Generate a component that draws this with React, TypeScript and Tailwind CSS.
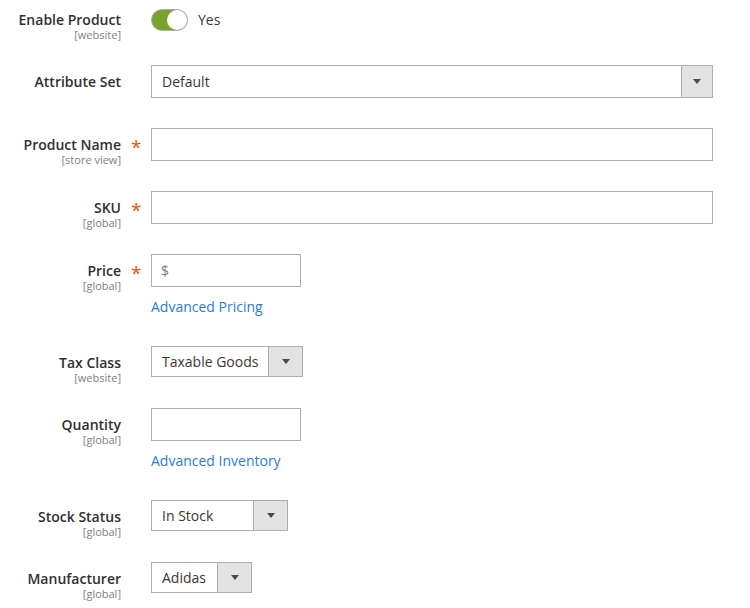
import React from 'react';

const ArrowDown = () => (
  <svg width="8" height="5" viewBox="0 0 8 5" className="text-[#514943]">
    <path d="M0 0h8L4 5z" fill="currentColor" />
  </svg>
);

const Label = ({ title, scope, required }: { title: string; scope?: string; required?: boolean }) => (
  <div className="flex w-[151px] shrink-0 pt-[8px]">
    <div className="w-[121px] text-right">
      <div className="text-[14px] leading-[18px] font-semibold text-[#303030]">{title}</div>
      {scope && <div className="text-[11px] leading-[11px] text-[#808080]">{scope}</div>}
    </div>
    {required && <span className="ml-[10px] text-[19px] leading-[23px] text-[#eb5202]">*</span>}
  </div>
);

const Input = ({ className, prefix }: { className: string; prefix?: string }) => (
  <div className={`h-[33px] border border-[#adadad] bg-white flex items-center px-[9px] text-[14px] text-[#8a7a6c] ${className}`}>
    {prefix}
  </div>
);

const Select = ({ value, className, arrowWidth }: { value: string; className: string; arrowWidth: string }) => (
  <div className={`flex border border-[#adadad] bg-white text-[14px] text-[#41362f] ${className}`}>
    <div className="flex-1 flex items-center pl-[10px] whitespace-nowrap">{value}</div>
    <div className={`shrink-0 border-l border-[#adadad] bg-[#e3e3e3] flex items-center justify-center ${arrowWidth}`}>
      <ArrowDown />
    </div>
  </div>
);

const LinkText = ({ children }: { children: React.ReactNode }) => (
  <div className="mt-[10px] text-[14px] leading-5 text-[#2a7bd6]">{children}</div>
);

export default function App() {
  return (
    <div className="w-[750px] h-[608px] overflow-hidden bg-white pt-[3px] font-['Open_Sans',sans-serif]">
      <div className="flex h-[62px]">
        <Label title="Enable Product" scope="[website]" />
        <div className="flex items-center h-[22px] mt-[6px]">
          <div className="relative w-[37px] h-[22px] rounded-full bg-[#79a22e] border border-[#adadad]">
            <div className="absolute right-0 top-0 w-5 h-5 rounded-full bg-white" />
          </div>
          <span className="ml-[10px] -mt-0.5 text-[14px] text-[#41362f]">Yes</span>
        </div>
      </div>

      <div className="flex h-[63px]">
        <Label title="Attribute Set" />
        <Select value="Default" className="w-[562px] h-[33px]" arrowWidth="w-[31px]" />
      </div>

      <div className="flex h-[63px]">
        <Label title="Product Name" scope="[store view]" required />
        <Input className="w-[562px]" />
      </div>

      <div className="flex h-[63px]">
        <Label title="SKU" scope="[global]" required />
        <Input className="w-[562px]" />
      </div>

      <div className="flex h-[92px]">
        <Label title="Price" scope="[global]" required />
        <div>
          <Input className="w-[150px]" prefix="$" />
          <LinkText>Advanced Pricing</LinkText>
        </div>
      </div>

      <div className="flex h-[62px]">
        <Label title="Tax Class" scope="[website]" />
        <Select value="Taxable Goods" className="w-[152px] h-[31px]" arrowWidth="w-[34px]" />
      </div>

      <div className="flex h-[92px]">
        <Label title="Quantity" scope="[global]" />
        <div>
          <Input className="w-[150px]" />
          <LinkText>Advanced Inventory</LinkText>
        </div>
      </div>

      <div className="flex h-[62px]">
        <Label title="Stock Status" scope="[global]" />
        <Select value="In Stock" className="w-[137px] h-[31px]" arrowWidth="w-[34px]" />
      </div>

      <div className="flex">
        <Label title="Manufacturer" scope="[global]" />
        <Select value="Adidas" className="w-[101px] h-[31px]" arrowWidth="w-[34px]" />
      </div>
    </div>
  );
}
